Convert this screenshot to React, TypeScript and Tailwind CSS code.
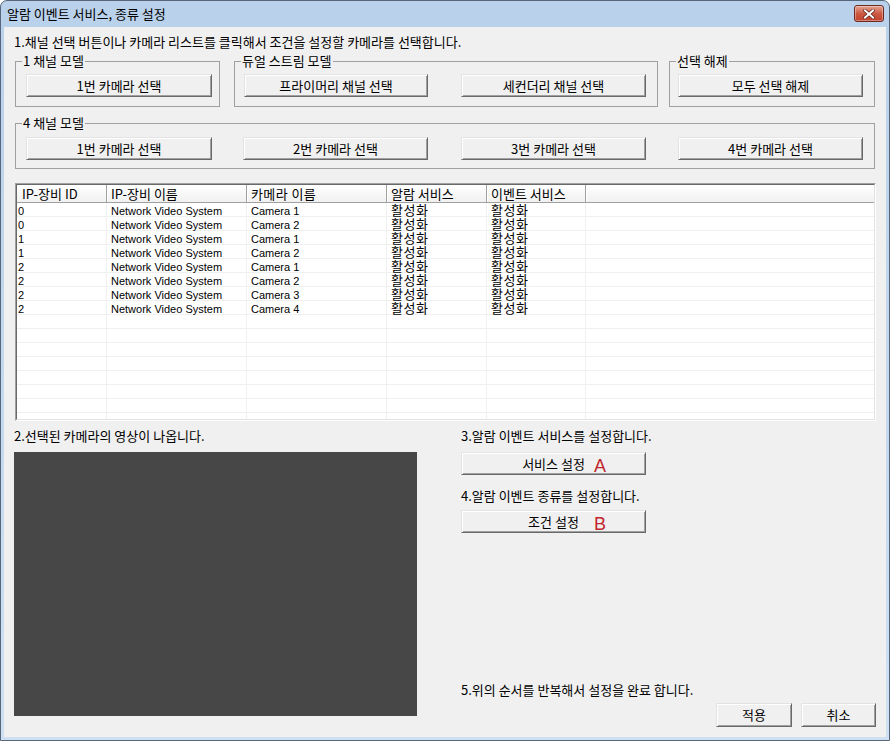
import React from "react";

const rows: [string, string][] = [
  ["0", "Camera 1"],
  ["0", "Camera 2"],
  ["1", "Camera 1"],
  ["1", "Camera 2"],
  ["2", "Camera 1"],
  ["2", "Camera 2"],
  ["2", "Camera 3"],
  ["2", "Camera 4"],
];

function Btn({ children, className = "" }: { children?: React.ReactNode; className?: string }) {
  return (
    <div
      className={
        "relative flex items-center justify-center bg-[#f0f0f0] border border-t-[#e3e3e3] border-l-[#e3e3e3] border-r-[#696969] border-b-[#696969] shadow-[inset_1px_1px_0_#ffffff,inset_-1px_-1px_0_#a0a0a0] text-[13px] leading-[14px] text-black " +
        className
      }
    >
      {children}
    </div>
  );
}

function Group({
  title,
  className = "",
  children,
}: {
  title: string;
  className?: string;
  children?: React.ReactNode;
}) {
  return (
    <fieldset className={"border border-[#a0a0a0] pl-[6px] " + className}>
      <legend className="px-[1px] text-[13px] leading-[14px] text-black">{title}</legend>
      {children}
    </fieldset>
  );
}

export default function App() {
  const emptyRows = Array.from({ length: 9 });
  return (
    <div className="w-[890px] h-[741px] flex flex-col border border-[#56677c] rounded-t-[7px] bg-gradient-to-b from-[#b9d1ea] to-[#cfe0f2] font-['Noto_Sans_CJK_KR',sans-serif] text-[13px] text-black overflow-hidden">
      {/* title bar */}
      <div className="h-[26px] flex items-start justify-between shrink-0">
        <div className="pl-[6px] pt-[6px] leading-[14px] text-[13px] text-black">알람 이벤트 서비스, 종류 설정</div>
        <div className="mt-[4px] mr-[5px] w-[30px] h-[17px] rounded-[3px] border border-[#6e2a22] bg-gradient-to-b from-[#e3a493] via-[#cc5a43] to-[#c0402a] flex items-center justify-center shadow-[inset_0_0_0_1px_rgba(255,255,255,0.35)]">
          <svg width="12" height="10" viewBox="0 0 12 10">
            <path d="M2 1.5 L10 8.5 M10 1.5 L2 8.5" stroke="#5a2018" strokeWidth="3.4" strokeLinecap="square" />
            <path d="M2 1.5 L10 8.5 M10 1.5 L2 8.5" stroke="#ffffff" strokeWidth="2" strokeLinecap="square" />
          </svg>
        </div>
      </div>

      {/* body */}
      <div className="flex-1 mx-[3px] mb-[3px] bg-[#f0f0f0] pl-[10px] pr-[10px] pt-[8px] flex flex-col">
        <div className="leading-[14px]">1.채널 선택 버튼이나 카메라 리스트를 클릭해서 조건을 설정할 카메라를 선택합니다.</div>

        {/* groups row */}
        <div className="mt-[5px] ml-[1px] flex">
          <Group title="1 채널 모델" className="w-[205px] pb-[9px]">
            <div className="pt-[6px] pl-[4px] flex">
              <Btn className="w-[186px] h-[23px]">1번 카메라 선택</Btn>
            </div>
          </Group>
          <Group title="듀얼 스트림 모델" className="w-[424px] ml-[14px] pb-[9px]">
            <div className="pt-[6px] pl-[3px] flex">
              <Btn className="w-[184px] h-[23px]">프라이머리 채널 선택</Btn>
              <Btn className="w-[185px] h-[23px] ml-[33px]">세컨더리 채널 선택</Btn>
            </div>
          </Group>
          <Group title="선택 해제" className="w-[206px] ml-[11px] pb-[9px]">
            <div className="pt-[6px] pl-[2px] flex">
              <Btn className="w-[185px] h-[23px]">모두 선택 해제</Btn>
            </div>
          </Group>
        </div>

        <Group title="4 채널 모델" className="mt-[9px] ml-[1px] w-[860px] pb-[8px]">
          <div className="pt-[7px] pl-[4px] flex">
            <Btn className="w-[186px] h-[23px]">1번 카메라 선택</Btn>
            <Btn className="w-[185px] h-[23px] ml-[31px]">2번 카메라 선택</Btn>
            <Btn className="w-[185px] h-[23px] ml-[33px]">3번 카메라 선택</Btn>
            <Btn className="w-[185px] h-[23px] ml-[32px]">4번 카메라 선택</Btn>
          </div>
        </Group>

        {/* list */}
        <div className="mt-[14px] ml-[1px] w-[861px] h-[238px] border border-t-[#a0a0a0] border-l-[#a0a0a0] border-r-white border-b-white shrink-0">
          <div className="w-full h-full border border-t-[#696969] border-l-[#696969] border-r-[#e3e3e3] border-b-[#e3e3e3] bg-white overflow-hidden">
            {/* header */}
            <div className="flex h-[18px] bg-gradient-to-b from-[#ffffff] to-[#f1f1f1] border-b border-[#a0a0a0] text-[13px] leading-[17px]">
              <div className="w-[90px] pl-[5px] border-r border-[#a0a0a0]">IP-장비 ID</div>
              <div className="w-[140px] pl-[4px] border-r border-[#a0a0a0] shadow-[inset_1px_0_0_#ffffff]">IP-장비 이름</div>
              <div className="w-[140px] pl-[4px] border-r border-[#a0a0a0] shadow-[inset_1px_0_0_#ffffff] tracking-[0.4px]">카메라 이름</div>
              <div className="w-[100px] pl-[4px] border-r border-[#a0a0a0] shadow-[inset_1px_0_0_#ffffff]">알람 서비스</div>
              <div className="w-[99px] pl-[4px] border-r border-[#a0a0a0] shadow-[inset_1px_0_0_#ffffff]">이벤트 서비스</div>
              <div className="flex-1 shadow-[inset_1px_0_0_#ffffff]"></div>
            </div>
            {rows.map(([id, cam], i) => (
              <div key={i} className="flex h-[14px] border-b border-[#f0f0f0] leading-[13px]">
                <div className="w-[90px] pl-[1px] border-r border-[#f0f0f0] font-['Liberation_Sans',sans-serif] text-[11px] leading-[16px]">{id}</div>
                <div className="w-[140px] pl-[4px] border-r border-[#f0f0f0] font-['Liberation_Sans',sans-serif] text-[11px] leading-[16px]">Network Video System</div>
                <div className="w-[140px] pl-[4px] border-r border-[#f0f0f0] font-['Liberation_Sans',sans-serif] text-[11px] leading-[16px]">{cam}</div>
                <div className="w-[100px] pl-[4px] border-r border-[#f0f0f0] text-[13px] tracking-[0.5px]">활성화</div>
                <div className="w-[99px] pl-[4px] border-r border-[#f0f0f0] text-[13px] tracking-[0.5px]">활성화</div>
                <div className="flex-1"></div>
              </div>
            ))}
            {emptyRows.map((_, i) => (
              <div key={"e" + i} className="flex h-[14px] border-b border-[#f0f0f0]">
                <div className="w-[90px] border-r border-[#f0f0f0]"></div>
                <div className="w-[140px] border-r border-[#f0f0f0]"></div>
                <div className="w-[140px] border-r border-[#f0f0f0]"></div>
                <div className="w-[100px] border-r border-[#f0f0f0]"></div>
                <div className="w-[99px] border-r border-[#f0f0f0]"></div>
                <div className="flex-1"></div>
              </div>
            ))}
          </div>
        </div>

        {/* bottom area */}
        <div className="mt-[8px] flex">
          <div className="w-[403px] flex flex-col">
            <div className="leading-[14px]">2.선택된 카메라의 영상이 나옵니다.</div>
            <div className="mt-[9px] h-[264px] bg-[#474747]"></div>
          </div>
          <div className="ml-[44px] flex-1 flex flex-col">
            <div className="leading-[14px]">3.알람 이벤트 서비스를 설정합니다.</div>
            <Btn className="mt-[9px] w-[185px] h-[23px]">
              서비스 설정
              <span className="absolute left-[132px] top-[4px] font-['Liberation_Sans',sans-serif] text-[18px] leading-[18px] text-[#c1272d]">A</span>
            </Btn>
            <div className="mt-[14px] leading-[14px]">4.알람 이벤트 종류를 설정합니다.</div>
            <Btn className="mt-[7px] w-[185px] h-[23px]">
              조건 설정
              <span className="absolute left-[132px] top-[4px] font-['Liberation_Sans',sans-serif] text-[18px] leading-[18px] text-[#c1272d]">B</span>
            </Btn>
            <div className="mt-[150px] leading-[14px]">5.위의 순서를 반복해서 설정을 완료 합니다.</div>
            <div className="mt-[6px] flex justify-end">
              <Btn className="w-[76px] h-[24px]">적용</Btn>
              <Btn className="w-[75px] h-[24px] ml-[9px]">취소</Btn>
            </div>
          </div>
        </div>
      </div>
    </div>
  );
}
